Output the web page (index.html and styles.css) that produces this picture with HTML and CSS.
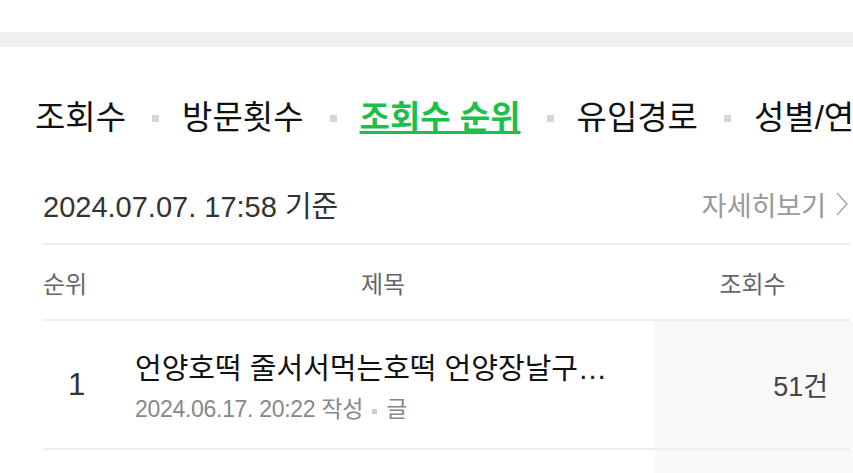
FILE: index.html
```html
<!DOCTYPE html>
<html lang="ko">
<head>
<meta charset="utf-8">
<link rel="stylesheet" href="styles.css">
</head>
<body>
<div class="topgap"></div>
<div class="band"></div>
<nav class="tabs">
  <span class="tab">조회수</span><span class="sep"></span>
  <span class="tab">방문횟수</span><span class="sep"></span>
  <span class="tab active">조회수 순위</span><span class="sep"></span>
  <span class="tab">유입경로</span><span class="sep"></span>
  <span class="tab">성별/연령별 분포</span>
</nav>
<section class="panel">
  <div class="info">
    <span class="stamp">2024.07.07. 17:58 기준</span>
    <span class="more">자세히보기<svg class="chev" width="16" height="26" viewBox="0 0 16 26"><polyline points="3,2 13,13 3,24" fill="none" stroke="#aaa" stroke-width="1.6"/></svg></span>
  </div>
  <div class="head">
    <span class="h-rank">순위</span>
    <span class="h-title">제목</span>
    <span class="h-count">조회수</span>
  </div>
  <div class="row">
    <span class="rank">1</span>
    <div class="title-cell">
      <div class="title">언양호떡 줄서서먹는호떡 언양장날구…</div>
      <div class="meta">2024.06.17. 20:22 작성<span class="dot"></span>글</div>
    </div>
    <span class="count">51건</span>
  </div>
  <div class="row empty">
    <span class="rank"></span>
    <div class="title-cell"></div>
    <span class="count"></span>
  </div>
</section>
</body>
</html>
```
FILE: styles.css
```css
html, body {
  margin: 0;
  padding: 0;
  background: #fff;
  font-family: "Liberation Sans", "Noto Sans CJK KR", sans-serif;
  overflow: hidden;
}
.topgap { height: 32px; }
.band { height: 15px; background: #efefef; }

.tabs {
  display: flex;
  align-items: center;
  white-space: nowrap;
  overflow: hidden;
  padding-left: 35px;
  margin-top: 49px;
  height: 44px;
  font-size: 33px;
  color: #111;
}
.tab { line-height: 44px; flex-shrink: 0; }
.tab.active {
  color: #1dbf4b;
  font-weight: bold;
  text-decoration: underline;
  text-decoration-thickness: 3px;
  text-underline-offset: 2px;
}
.sep {
  flex-shrink: 0;
  width: 7px;
  height: 7px;
  background: #d6d6d6;
  margin: 0 23px 0 26px;
}

.panel { padding: 0 3px 0 43px; margin-top: 40px; }
.info {
  display: flex;
  justify-content: space-between;
  align-items: center;
  height: 48px;
  border-bottom: 2px solid #eeeeee;
  padding-bottom: 15px;
}
.stamp { font-size: 29px; color: #333; }
.more {
  display: flex;
  align-items: center;
  font-size: 27px;
  color: #999;
}
.chev { margin-left: 8px; }

.head {
  display: flex;
  align-items: center;
  height: 74px;
  border-bottom: 2px solid #eeeeee;
  font-size: 24px;
  color: #666;
}
.h-rank { width: 92px; }
.h-title { width: 496px; text-align: center; }
.h-count { flex: 1; text-align: center; padding-left: 24px; }

.row {
  display: flex;
  align-items: stretch;
  height: 127px;
  border-bottom: 2px solid #eeeeee;
}
.rank {
  width: 67px;
  display: flex;
  align-items: center;
  justify-content: center;
  font-size: 31px;
  color: #333;
}
.title-cell {
  width: 545px;
  padding-left: 25px;
  box-sizing: border-box;
  display: flex;
  flex-direction: column;
  justify-content: center;
}
.title {
  font-size: 29px;
  color: #111;
  white-space: nowrap;
}
.meta {
  margin-top: 3px;
  font-size: 23px;
  color: #888;
  letter-spacing: -0.3px;
  display: flex;
  align-items: center;
}
.dot {
  width: 5px;
  height: 5px;
  background: #ccc;
  margin: 8px 9px 0 9px;
}
.count {
  flex: 1;
  background: #f8f8f8;
  display: flex;
  align-items: center;
  justify-content: flex-end;
  padding-right: 25px;
  font-size: 27px;
  color: #444;
  margin-right: -3px;
}
.row.empty { border-bottom: none; }
```
